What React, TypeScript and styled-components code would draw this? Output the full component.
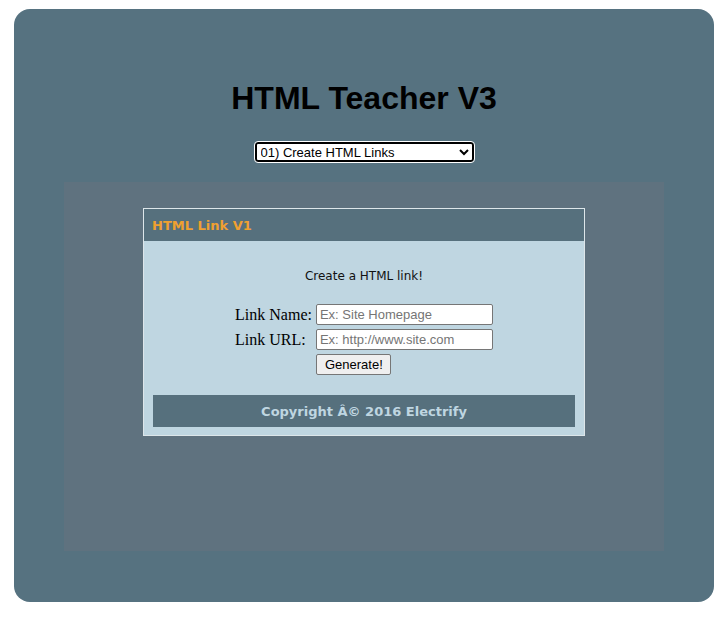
import styled, { createGlobalStyle } from "styled-components";

const GlobalStyle = createGlobalStyle`
  html, body {
    margin: 0;
    padding: 0;
    background: #ffffff;
  }
  body {
    font-family: "Liberation Sans", Arial, sans-serif;
  }
`;

const Page = styled.div`
  width: 700px;
  height: 593px;
  margin: 9px auto 0;
  background: #567280;
  border-radius: 16px;
  display: flex;
  flex-direction: column;
  align-items: center;
  box-sizing: border-box;
  padding-top: 71px;
`;

const Title = styled.h1`
  margin: 0;
  font-family: "Liberation Sans", Arial, sans-serif;
  font-size: 32px;
  font-weight: bold;
  line-height: 37px;
  color: #000;
`;

const LessonSelect = styled.select`
  margin-top: 25px;
  width: 219px;
  height: 20px;
  box-sizing: border-box;
  border: 2px solid #000;
  border-radius: 3px;
  background: #fff;
  font-family: "Liberation Sans", Arial, sans-serif;
  font-size: 13px;
  color: #000;
  padding: 0;
  outline: 1px solid #fff;
`;

const Stage = styled.div`
  margin-top: 20px;
  width: 600px;
  height: 369px;
  background: #5f727f;
  box-sizing: border-box;
  padding-top: 26px;
  display: flex;
  flex-direction: column;
  align-items: center;
`;

const Card = styled.div`
  width: 442px;
  box-sizing: border-box;
  border: 1px solid #dde6ea;
  background: #bfd6e1;
`;

const CardHeader = styled.div`
  height: 32px;
  background: #56707d;
  display: flex;
  align-items: center;
  padding-left: 8px;
  font-family: "DejaVu Sans", Verdana, sans-serif;
  font-size: 13px;
  font-weight: bold;
  color: #f0a030;
`;

const CardBody = styled.div`
  padding: 28px 9px 8px;
  display: flex;
  flex-direction: column;
  align-items: center;
`;

const Intro = styled.p`
  margin: 0;
  font-family: "DejaVu Sans", Verdana, sans-serif;
  font-size: 12px;
  color: #111;
`;

const Form = styled.div`
  margin-top: 21px;
  display: grid;
  grid-template-columns: auto auto;
  column-gap: 4px;
  row-gap: 4px;
  align-items: center;
`;

const Label = styled.label`
  font-family: "Liberation Serif", "Times New Roman", serif;
  font-size: 16px;
  color: #000;
`;

const TextInput = styled.input`
  width: 177px;
  height: 21px;
  box-sizing: border-box;
  border: 1px solid #767676;
  border-radius: 2px;
  padding: 0 3px;
  font-family: "Liberation Sans", Arial, sans-serif;
  font-size: 13px;
  background: #fff;
  &::placeholder {
    color: #757575;
  }
`;

const GenerateButton = styled.button`
  grid-column: 2;
  justify-self: start;
  height: 21px;
  padding: 0 7px 0 8px;
  border: 1px solid #767676;
  border-radius: 2px;
  background: #efefef;
  font-family: "Liberation Sans", Arial, sans-serif;
  font-size: 13px;
  color: #000;
`;

const Footer = styled.div`
  margin-top: 20px;
  align-self: stretch;
  height: 32px;
  background: #56707d;
  display: flex;
  align-items: center;
  justify-content: center;
  font-family: "DejaVu Sans", Verdana, sans-serif;
  font-size: 13px;
  font-weight: bold;
  color: #bfd6e1;
`;

export default function App() {
  return (
    <>
      <GlobalStyle />
      <Page>
        <Title>HTML Teacher V3</Title>
        <LessonSelect defaultValue="01">
          <option value="01">01) Create HTML Links</option>
        </LessonSelect>
        <Stage>
          <Card>
            <CardHeader>HTML Link V1</CardHeader>
            <CardBody>
              <Intro>Create a HTML link!</Intro>
              <Form>
                <Label>Link Name:</Label>
                <TextInput placeholder="Ex: Site Homepage" />
                <Label>Link URL:</Label>
                <TextInput placeholder="Ex: http://www.site.com" />
                <GenerateButton>Generate!</GenerateButton>
              </Form>
              <Footer>Copyright Â© 2016 Electrify</Footer>
            </CardBody>
          </Card>
        </Stage>
      </Page>
    </>
  );
}
